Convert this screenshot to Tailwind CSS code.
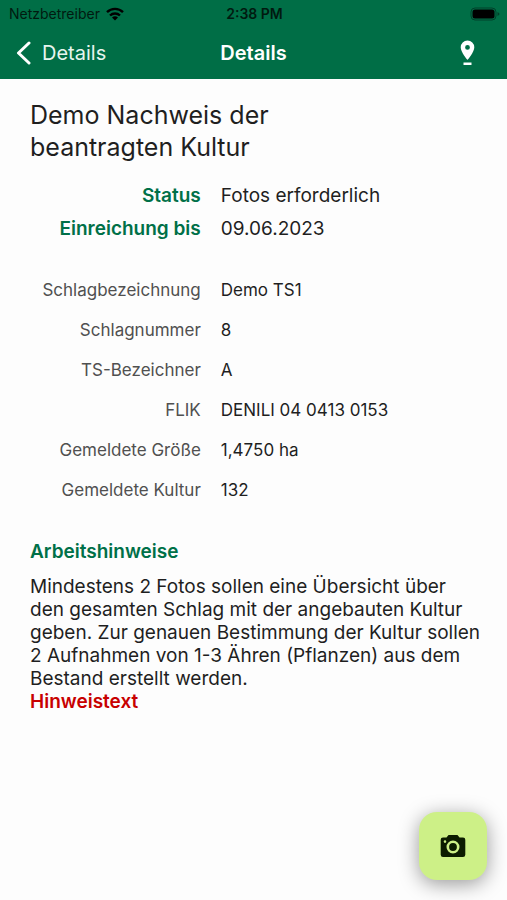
<!DOCTYPE html>
<html lang="de">
<head>
  <meta charset="UTF-8" />
  <meta name="viewport" content="width=device-width, initial-scale=1.0"/>
  <title>Details</title>
  <script src="https://cdn.jsdelivr.net/npm/@tailwindcss/browser@4"></script>
</head>
<body class="bg-[#fdfdfd] text-[#1f1f1f] font-['Inter',sans-serif]">
  <header class="bg-[#006e46]">
    <!-- Status bar -->
    <div class="grid grid-cols-3 items-center h-[27px] pl-[9px] pr-[7px] text-sm text-[#001a10]">
      <div class="flex items-center gap-[6px]">
        <span>Netzbetreiber</span>
        <svg class="w-[18px] h-[14px]" viewBox="0 0 18 14" fill="none" stroke="#000" stroke-width="2.4">
          <path d="M1 5.2a11.4 11.4 0 0 1 16 0"/>
          <path d="M4 8.5a7.2 7.2 0 0 1 10 0"/>
          <path d="M9 13.6 6 10.6a4.3 4.3 0 0 1 6 0z" fill="#000" stroke="none"/>
        </svg>
      </div>
      <span class="text-center font-semibold">2:38 PM</span>
      <svg class="w-[30px] h-[14px] justify-self-end" viewBox="0 0 30 14">
        <rect x="1" y="1" width="25" height="12" rx="4" fill="none" stroke="#00402a"/>
        <rect x="2.5" y="2.5" width="22" height="9" rx="2.5" fill="#000"/>
        <path d="M27.5 5v4q2-.8 2-2t-2-2z" fill="#00402a"/>
      </svg>
    </div>
    <!-- Navigation bar -->
    <nav class="grid grid-cols-3 items-center h-[52px] px-4 text-xl text-white">
      <a href="#" class="flex items-center gap-[10px] text-[#e6f5ee]">
        <svg class="w-4 h-6" viewBox="0 0 16 24" fill="none" stroke="#fff" stroke-width="3" stroke-linecap="round" stroke-linejoin="round">
          <path d="M13 2 2.5 12 13 22"/>
        </svg>
        Details
      </a>
      <h1 class="text-center font-semibold">Details</h1>
      <button type="button" aria-label="Karte" class="justify-self-end mr-4">
        <svg class="w-[15px] h-[26px] block" viewBox="0 0 15 26" fill="#fff">
          <path fill-rule="evenodd" d="M7.5.5a6.8 6.8 0 0 1 6.8 6.8c0 4.8-6.8 12.700-6.8 12.700S.7 12.100.7 7.300A6.800 6.800 0 0 1 7.500.5zm0 4.500a2.400 2.400 0 1 0 0 4.800 2.400 2.400 0 0 0 0-4.800z"/>
          <path d="M3.500 22.500h8V25h-8z"/>
        </svg>
      </button>
    </nav>
  </header>

  <main class="pl-[30px] pr-6 pt-5">
    <h2 class="text-[25px] leading-8 max-w-[300px]">Demo Nachweis der beantragten Kultur</h2>

    <dl class="grid grid-cols-[2fr_3fr] gap-x-5 mt-4 pr-[6px] text-[19px] leading-[33px]">
      <dt class="text-right font-semibold text-[#007048] whitespace-nowrap">Status</dt>
      <dd>Fotos erforderlich</dd>
      <dt class="text-right font-semibold text-[#007048] whitespace-nowrap">Einreichung bis</dt>
      <dd>09.06.2023</dd>
    </dl>

    <dl class="grid grid-cols-[2fr_3fr] gap-x-5 mt-[25px] pr-[6px] text-[17px] leading-10">
      <dt class="text-right text-[#505050]">Schlagbezeichnung</dt>
      <dd>Demo TS1</dd>
      <dt class="text-right text-[#505050]">Schlagnummer</dt>
      <dd>8</dd>
      <dt class="text-right text-[#505050]">TS-Bezeichner</dt>
      <dd>A</dd>
      <dt class="text-right text-[#505050]">FLIK</dt>
      <dd>DENILI 04 0413 0153</dd>
      <dt class="text-right text-[#505050]">Gemeldete Größe</dt>
      <dd>1,4750 ha</dd>
      <dt class="text-right text-[#505050]">Gemeldete Kultur</dt>
      <dd>132</dd>
    </dl>

    <section class="mt-[30px] text-[19px] leading-[23px]">
      <h3 class="font-semibold text-[#007048] mb-3">Arbeitshinweise</h3>
      <p>Mindestens 2 Fotos sollen eine Übersicht über den gesamten Schlag mit der angebauten Kultur geben. Zur genauen Bestimmung der Kultur sollen 2 Aufnahmen von 1-3 Ähren (Pflanzen) aus dem Bestand erstellt werden.</p>
      <p class="font-semibold text-[#c80000]">Hinweistext</p>
    </section>
  </main>

  <button type="button" aria-label="Foto aufnehmen" class="fixed bottom-5 right-5 w-[68px] h-[68px] rounded-[18px] bg-[#cdf087] shadow-[0_4px_20px_rgba(0,0,0,0.4)] flex items-center justify-center">
    <svg class="w-[26px] h-6" viewBox="0 0 26 24" fill="#0c1c00">
      <path fill-rule="evenodd" d="M8.5 1h9l2 2.500H23A2.300 2.300 0 0 1 25.300 5.800v15A2.300 2.300 0 0 1 23 23H3A2.300 2.300 0 0 1 .7 20.800v-15A2.300 2.300 0 0 1 3 3.500h3.500zM13 6.500a6.500 6.500 0 1 0 0 13 6.500 6.500 0 0 0 0-13zm0 2.600a3.900 3.900 0 1 1 0 7.800 3.900 3.900 0 0 1 0-7.800zM5 6.300a1.300 1.300 0 1 0 0 2.600 1.300 1.300 0 0 0 0-2.600z"/>
    </svg>
  </button>
</body>
</html>
